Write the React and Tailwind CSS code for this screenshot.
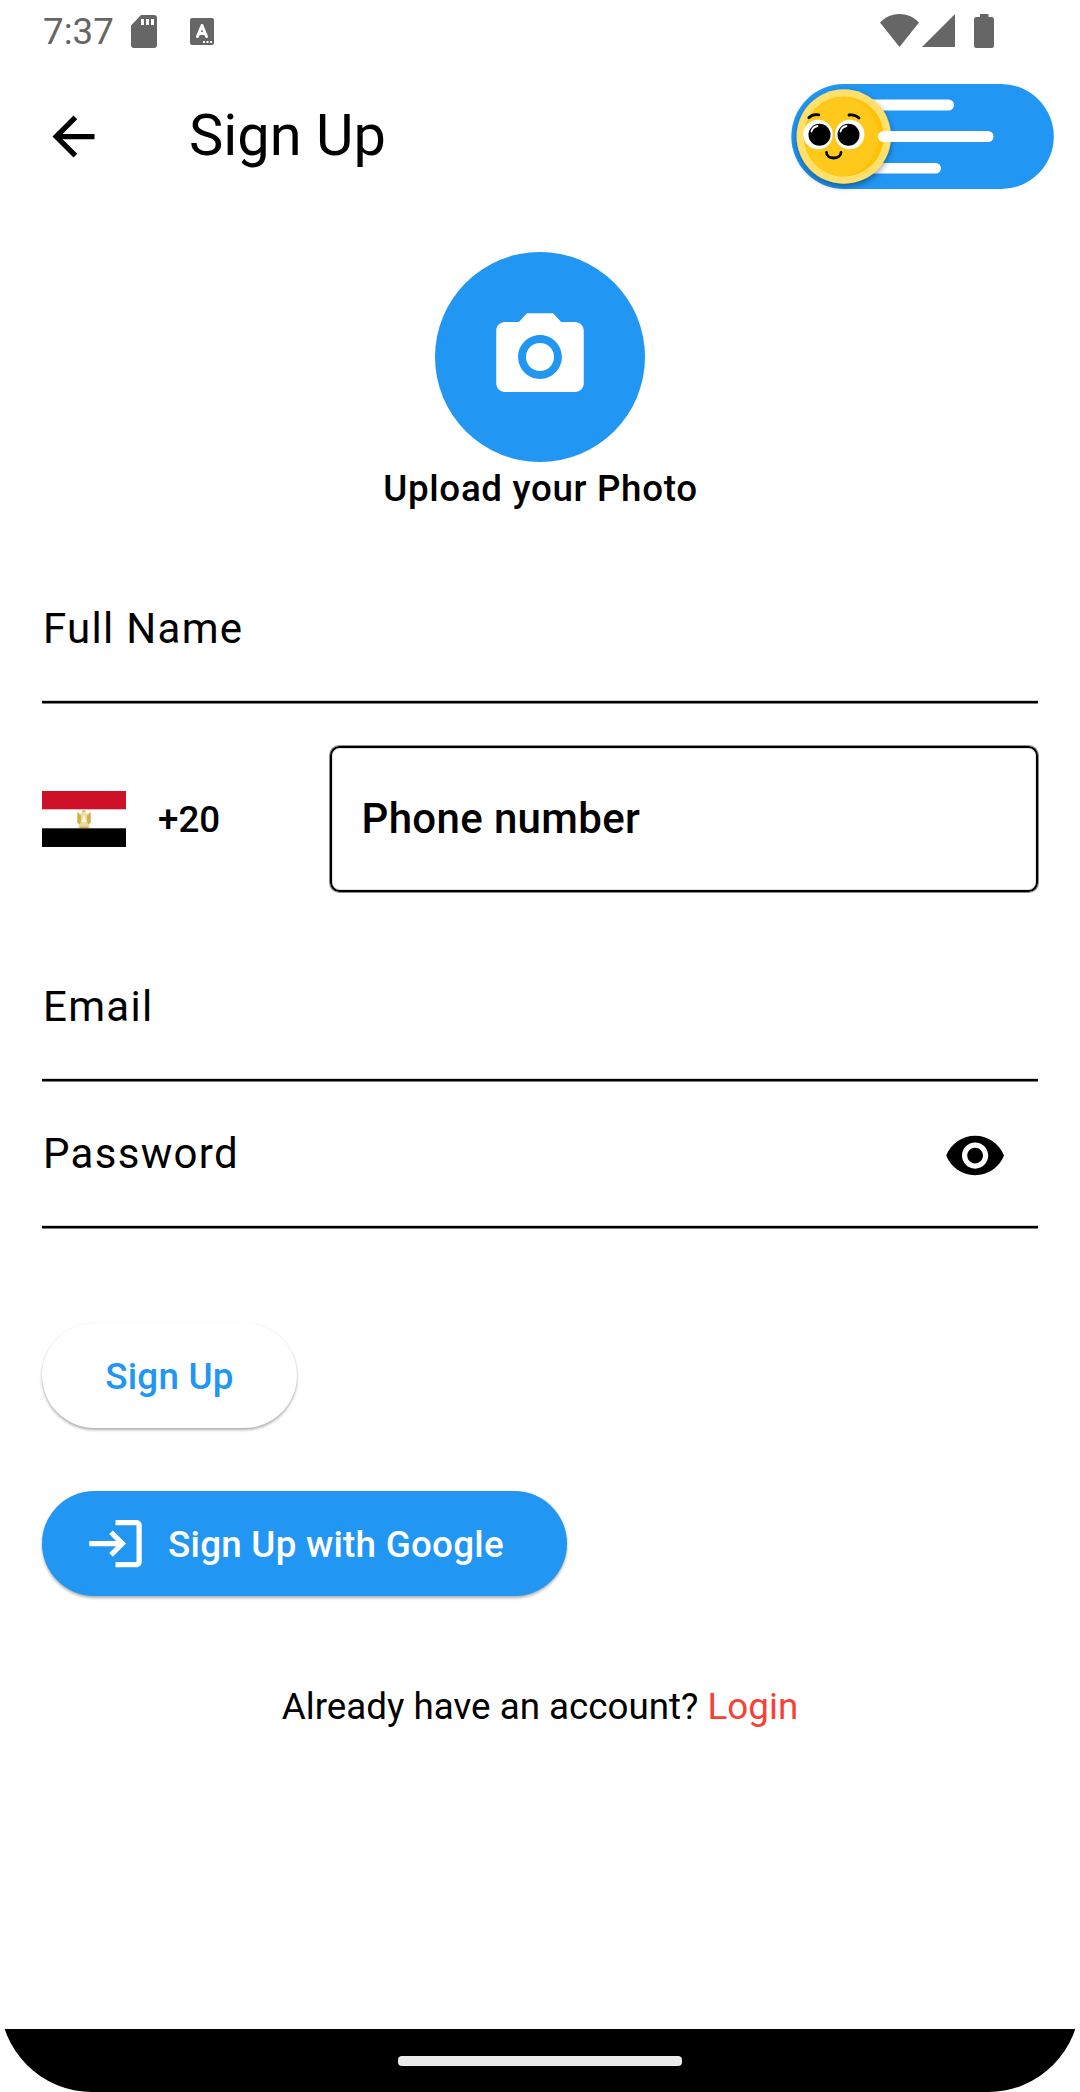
import React from "react";

const fieldLine = "h-1 w-full bg-[linear-gradient(#d4d4d4_1px,#000_1px,#000_3px,#7d7d7d_3px)]";

function StatusBar() {
  return (
    <div className="flex h-[63px] items-start justify-between pl-[43px] pr-[86px] text-[#666]">
      <div className="flex items-start">
        <span className="mt-[10px] w-[88px] text-[36.75px] leading-[43px]">7:37</span>
        <svg className="mt-[15px]" width="26" height="33" viewBox="0 0 26 33" fill="currentColor">
          <path fillRule="evenodd" d="M10 0H23a3 3 0 0 1 3 3V30a3 3 0 0 1-3 3H3a3 3 0 0 1-3-3V10.500ZM10 4V10h3V4ZM15 4V10h3V4ZM20 4V10h3V4Z" />
        </svg>
        <svg className="ml-[33px] mt-[18px]" width="24" height="27" viewBox="0 0 24 27">
          <rect width="24" height="27" rx="2" fill="currentColor" />
          <path d="M7.500 18.500L12 7.500L16.500 18.500M9 15.500H15" fill="none" stroke="#fff" strokeWidth="3" strokeLinecap="round" strokeLinejoin="round" />
          <path d="M13 23h2v2h-2zM16.500 23h2v2h-2zM20 23h2v2h-2z" fill="#fff" />
        </svg>
      </div>
      <svg className="mt-[14px]" width="114" height="34" viewBox="0 0 114 34" fill="currentColor">
        <path d="M0 8.500C11-2.800 28-2.800 39 8.500L19.500 33Z" />
        <path d="M75 0V33H42Z" />
        <path d="M100 0h8.500v3h3a2.500 2.500 0 0 1 2.500 2.500V31.500a2.500 2.500 0 0 1-2.500 2.500h-15a2.500 2.500 0 0 1-2.500-2.500V5.500a2.500 2.500 0 0 1 2.500-2.500h3.500z" />
      </svg>
    </div>
  );
}

function DayNightSwitch() {
  return (
    <svg width="275" height="117" viewBox="785 78 275 117">
      <defs>
        <filter id="ballShadow" x="-20%" y="-20%" width="140%" height="140%">
          <feDropShadow dx="0" dy="3" stdDeviation="3" floodColor="#000" floodOpacity=".4" />
        </filter>
        <clipPath id="ballFace">
          <circle cx="843.800" cy="136.500" r="40" />
        </clipPath>
      </defs>
      <rect x="791.300" y="84" width="262.500" height="105" rx="52.500" fill="#2196f3" />
      <rect x="860" y="99.500" width="94" height="11" rx="5.500" fill="#fff" />
      <rect x="850" y="163" width="91" height="10.500" rx="5.200" fill="#fff" />
      <circle cx="843.800" cy="136.500" r="47.200" fill="#ffe06b" filter="url(#ballShadow)" />
      <circle cx="843.800" cy="136.500" r="40" fill="#ffc107" />
      <circle cx="838.500" cy="136.500" r="40" fill="#ffc91c" clipPath="url(#ballFace)" />
      <circle cx="818" cy="134.500" r="14.700" fill="#fff" />
      <circle cx="849.700" cy="134.500" r="14.700" fill="#fff" />
      <circle cx="819.500" cy="134.700" r="11" />
      <circle cx="848.500" cy="134.700" r="11" />
      <path d="M811.500 131.500q1-4.500 6-5.500M840.500 131.500q1-4.500 6-5.500" fill="none" stroke="#fff" strokeWidth="1.800" strokeLinecap="round" />
      <path d="M808.800 117.700q4-4 10-2.800M849 115q6-1 10 3M826.500 152.500c0 7.300 14.500 7.300 14.500 0" fill="none" stroke="#000" strokeWidth="2.800" strokeLinecap="round" />
      <rect x="878" y="131" width="115.500" height="11" rx="5.500" fill="#fff" />
    </svg>
  );
}

function EgyptFlag() {
  return (
    <svg width="84" height="56" viewBox="0 0 84 56">
      <rect width="84" height="56" fill="#fff" />
      <rect width="84" height="18.300" fill="#ce1126" />
      <rect y="37.300" width="84" height="18.700" fill="#000" />
      <path d="M40 19.500l2-.8 1.500.8v3h2l3.500-2v11l-2 2.500 1.500 3h-13l1.500-3-2-2.500v-11l3.500 2h1.500z" fill="#ead9a0" />
      <path d="M35.500 22l3.500 2.500v5l-1 4-2.500-2zM48.500 22l-3.500 2.500v5l1 4 2.500-2z" fill="#d3b040" />
      <path d="M38 36.300h8" stroke="#cfae45" strokeWidth="1.200" />
      <path d="M42 23l2.200 8h-4.400z" fill="#fffaf0" />
      <path d="M40.500 20h3" stroke="#c9a227" strokeWidth="1" />
    </svg>
  );
}

export default function App() {
  return (
    <div className="flex h-[2092px] w-[1080px] flex-col overflow-hidden rounded-b-[92px] bg-white font-['Roboto',sans-serif] text-black">
      <StatusBar />
      <header className="flex h-[147px] items-center pl-[42px] pr-5">
        <svg width="63" height="63" viewBox="0 0 24 24">
          <path d="M20 11H7.830l5.590-5.590L12 4l-8 8 8 8 1.410-1.410L7.830 13H20v-2z" />
        </svg>
        <h1 className="ml-[84px] grow pb-0.5 text-[57.75px] leading-[73px]">Sign Up</h1>
        <DayNightSwitch />
      </header>

      <section className="mt-[42px] flex flex-col items-center">
        <button className="flex size-[210px] items-center justify-center rounded-full bg-[#2196f3]">
          <svg width="106" height="106" viewBox="-0.114 -0.114 24.228 24.228" fill="#fff">
            <circle cx="12" cy="12" r="3.200" />
            <path d="M9 2L7.170 4H4c-1.100 0-2 .9-2 2v12c0 1.100.9 2 2 2h16c1.100 0 2-.9 2-2V6c0-1.100-.9-2-2-2h-3.170L15 2H9zm3 15c-2.760 0-5-2.240-5-5s2.240-5 5-5 5 2.240 5 5-2.240 5-5 5z" />
          </svg>
        </button>
        <p className="h-[52px] pl-px text-[36.75px] font-medium leading-[54px] tracking-[0.66px]">Upload your Photo</p>
      </section>

      <form className="flex flex-col items-start pl-[42px] pt-[43px]">
        <label className="flex h-[147px] w-[995.5px] flex-col justify-between">
          <span className="pl-px pt-[40px] text-[42px] leading-[63px] tracking-[1.3px]">Full Name</span>
          <span className={fieldLine} />
        </label>
        <div className="mt-[42px] flex h-[146px] w-[995.5px] items-center">
          <EgyptFlag />
          <span className="ml-8 w-[172px] pt-0.5 text-[36.75px] font-medium leading-[52px]">+20</span>
          <div className="flex h-[146px] grow items-center rounded-[9.5px] border-2 border-black pl-[29.5px] shadow-[0_0_0_1px_#8a8a8a,inset_0_0_0_1px_#e0e0e0]">
            <span className="pb-0.5 text-[42px] font-medium leading-[63px] tracking-[0.35px]">Phone number</span>
          </div>
        </div>
        <label className="mt-[43px] flex h-[147px] w-[995.5px] flex-col justify-between">
          <span className="pl-px pt-[40px] text-[42px] leading-[63px] tracking-[1.3px]">Email</span>
          <span className={fieldLine} />
        </label>
        <div className="flex h-[147px] w-[995.5px] flex-col justify-between">
          <div className="flex items-start justify-between pr-[31px]">
            <span className="pl-px pt-[40px] text-[42px] leading-[63px] tracking-[1.3px]">Password</span>
            <svg className="mt-[42px]" width="63" height="63" viewBox="0.15 0 24 24">
              <path d="M12 4.500C7 4.500 2.730 7.610 1 12c1.730 4.390 6 7.500 11 7.500s9.270-3.110 11-7.500c-1.730-4.390-6-7.500-11-7.500zM12 17c-2.760 0-5-2.240-5-5s2.240-5 5-5 5 2.240 5 5-2.240 5-5 5zm0-8c-1.660 0-3 1.340-3 3s1.340 3 3 3 3-1.340 3-3-1.340-3-3-3z" />
            </svg>
          </div>
          <span className={fieldLine} />
        </div>

        <button type="button" className="mt-[94px] h-[105px] w-[255px] rounded-full bg-white pt-0.5 text-[36.75px] font-medium leading-[52px] tracking-[0.26px] text-[#2196f3] shadow-[0_2px_3px_rgba(0,0,0,0.32),0_0_1px_rgba(0,0,0,0.06)]">
          Sign Up
        </button>
        <button type="button" className="mt-[63px] flex h-[105px] w-[525px] items-center rounded-full bg-[#2196f3] pl-[42px] text-[36.75px] font-medium leading-[52px] tracking-[0.26px] text-white shadow-[0_2px_3px_rgba(0,0,0,0.32),0_0_1px_rgba(0,0,0,0.06)]">
          <svg className="mr-[21px]" width="63" height="63" viewBox="0 0 24 24" fill="#fff">
            <path d="M11 7L9.600 8.400l2.600 2.600H2v2h10.200l-2.600 2.600L11 17l5-5-5-5zm9 12h-8v2h8c1.100 0 2-.9 2-2V5c0-1.100-.9-2-2-2h-8v2h8v14z" />
          </svg>
          <span className="pt-0.5">Sign Up with Google</span>
        </button>
      </form>

      <p className="mt-[85px] text-center text-[36.75px] leading-[52px]">
        Already have an account? <a className="text-[#f44336]">Login</a>
      </p>

      <footer className="mt-auto flex h-[63px] justify-center bg-black pt-[27px]">
        <div className="h-2.5 w-[284px] rounded-[4px] bg-[#ebebeb]" />
      </footer>
    </div>
  );
}
